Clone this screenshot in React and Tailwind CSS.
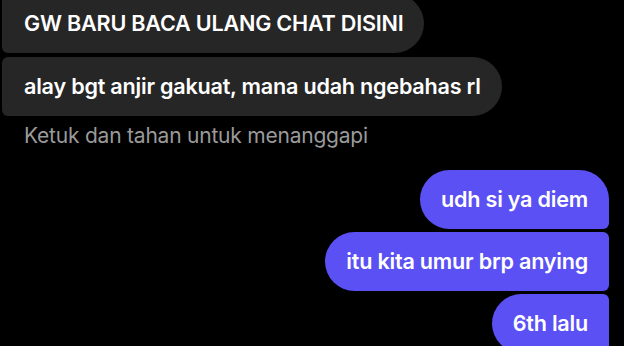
import React from 'react';

const Left = ({ children, className }) => (
  <div className={`self-start h-[59px] flex items-center bg-[#262626] text-white pl-[22px] pr-[21px] ${className}`}>
    {children}
  </div>
);

const Right = ({ children, className }) => (
  <div className={`self-end h-[59px] flex items-center bg-[#5a50f4] text-white pl-[21px] pr-[21px] rounded-l-[30px] ${className}`}>
    {children}
  </div>
);

export default function App() {
  return (
    <div
      className="w-[624px] h-[346px] bg-black overflow-hidden flex flex-col pl-[2px] pr-[15px] text-[21.6px] font-semibold tracking-[-0.01em]"
      style={{ fontFamily: 'Inter, "Noto Sans", sans-serif' }}
    >
      <div className="flex flex-col gap-[4px] -mt-[6px]">
        <Left className="rounded-l-[6px] rounded-r-[30px]">GW BARU BACA ULANG CHAT DISINI</Left>
        <Left className="rounded-l-[6px] rounded-r-[30px]">alay bgt anjir gakuat, mana udah ngebahas rl</Left>
      </div>
      <p className="mt-[6px] pl-[22px] text-[#9a9a9a] text-[21px] font-normal leading-[28px]">Ketuk dan tahan untuk menanggapi</p>
      <div className="flex flex-col gap-[3px] mt-[20px]">
        <Right className="rounded-tr-[30px] rounded-br-[6px]">udh si ya diem</Right>
        <Right className="rounded-r-[6px]">itu kita umur brp anying</Right>
        <Right className="rounded-r-[6px]">6th lalu</Right>
      </div>
    </div>
  );
}
